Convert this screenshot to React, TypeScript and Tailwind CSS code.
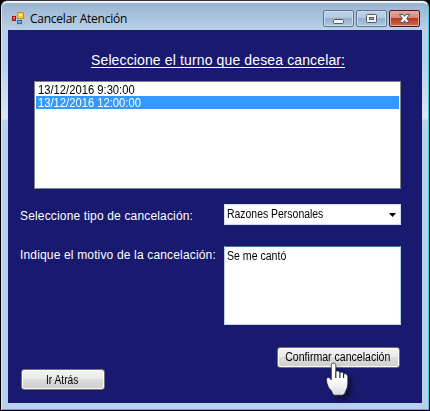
import type { ReactNode } from "react";

function AppIcon() {
  return (
    <svg width="14" height="14" viewBox="0 0 14 14" className="shrink-0">
      <rect x=".5" y=".5" width="13" height="13" fill="none" stroke="#b9bdc3" />
      <rect x="6.500" y="1.500" width="6" height="6" fill="#f6c93a" stroke="#c1921c" />
      <rect x="8" y="3" width="3" height="2" fill="#ffe993" />
      <rect x="1.500" y="5.500" width="3" height="4" fill="#e04a30" stroke="#9c1710" />
      <rect x="2" y="6" width="2" height="1" fill="#ff9a80" />
      <rect x="6.500" y="9.500" width="4" height="3" fill="#76a9f4" stroke="#2e62bd" />
    </svg>
  );
}

function CaptionButton({ danger = false, children }: { danger?: boolean; children: ReactNode }) {
  const tone = danger
    ? "border-[#501322] bg-[linear-gradient(#e4a79c_0,#d98675_45%,#b93a20_50%,#cc6a50_100%)] shadow-[inset_0_0_0_1px_#e5aaa0]"
    : "border-[#62748b] bg-[linear-gradient(#c0d4e9_0,#b1c8df_45%,#94b0cc_50%,#adc8e2_100%)] shadow-[inset_0_0_0_1px_#c9dcef]";
  return (
    <div className={`flex h-[17px] w-[31px] items-center justify-center rounded-[2px] border ${tone}`}>
      {children}
    </div>
  );
}

function HandCursor() {
  return (
    <svg
      width="28"
      height="38"
      viewBox="0 0 28 38"
      className="absolute left-[325px] top-[361px] drop-shadow-[4px_4px_2px_rgba(0,0,0,0.4)]"
    >
      <defs>
        <linearGradient id="hand" x1="0" y1="0" x2="0" y2="1">
          <stop offset="0.5" stopColor="#ffffff" />
          <stop offset="1" stopColor="#dcdce0" />
        </linearGradient>
      </defs>
      <path
        d="M6.300 19V4.500Q6.300 2 8.500 2Q10.800 2 10.800 4.500V10.500Q11.500 9.700 13 9.900Q14.600 10 14.900 11.300Q17.500 10.500 18.600 12.500Q22.300 12 22.800 15.500V23Q22.500 27 21 29.500Q20 33.500 17.500 34.200H9.500Q7 33 6.500 30Q3 27 2 22.500L1.400 18Q2.500 15.500 5 17Z"
        fill="url(#hand)"
        stroke="#17172f"
        strokeWidth=".7"
      />
      <path d="M10.800 10.500V17M14.900 11.300V17M18.600 12.500V17" fill="none" stroke="#17172f" strokeWidth="1.100" />
    </svg>
  );
}

const button =
  "flex items-center justify-center rounded-[3px] border border-[#707070] bg-[linear-gradient(#f3f3f3_0,#ebebeb_48%,#dcdcdc_50%,#cfcfcf_100%)] text-black shadow-[inset_0_0_0_1px_#fafafa]";

export default function App() {
  return (
    <div className="relative h-[411px] w-[430px] overflow-hidden bg-black font-['Liberation_Sans',Arial,sans-serif] text-[12px] leading-[13px]">
      <div className="h-[411px] w-[430px] rounded-t-[7px] border border-t-[#30343b] border-x-black border-b-black">
        <div className="flex h-full flex-col rounded-t-[6px] border-b border-l border-r border-t-2 border-b-[#2cc3dc] border-l-[#d9e8f5] border-r-[#46cfe5] border-t-[#eef5fb] bg-[linear-gradient(#9ab5d1_0,#b9d1ea_28px,#b9d1ea_60px,#dbe6f5_115px,#b9d1ea_118px,#b9d1ea_100%)] px-[6px] pb-[6px]">
          <header className="flex h-[27px] shrink-0 items-start pl-[3px] pr-[2px]">
            <div className="mt-[8px] flex">
              <AppIcon />
            </div>
            <h1 className="ml-[5px] mt-[8px] whitespace-nowrap font-['Open_Sans','Noto_Sans',sans-serif] text-[12px] leading-[16px] tracking-[-0.240px] text-black">
              Cancelar Atención
            </h1>
            <div className="ml-auto mt-[7px] flex gap-[2px]">
              <CaptionButton>
                <svg width="11" height="5" className="mt-[5px]">
                  <rect x=".5" y=".5" width="10" height="4" rx="1" fill="#f5f5f5" stroke="#535666" />
                </svg>
              </CaptionButton>
              <CaptionButton>
                <svg width="11" height="9">
                  <rect x=".5" y=".5" width="10" height="8" rx="1" fill="#f5f5f5" stroke="#535666" />
                  <rect x="3.500" y="3.500" width="4" height="2" fill="#9bb8d3" stroke="#535666" />
                </svg>
              </CaptionButton>
              <CaptionButton danger>
                <svg width="11" height="9" viewBox="0 0 11 9">
                  <path d="M.5.5H4L5.500 2.300L7 .5H10.500L7.800 4.500L10.500 8.500H7L5.500 6.700L4 8.500H.5L3.200 4.500Z" fill="#f5f5f5" stroke="#535666" />
                </svg>
              </CaptionButton>
            </div>
          </header>

          <main className="flex grow flex-col bg-[#191970] pl-[12px] pr-[21px] text-white">
            <h2 className="ml-[71px] mt-[22px] h-[16px] w-[254px] whitespace-nowrap border-b border-white text-[14px] leading-[16px] tracking-[0.130px]">
              Seleccione el turno que desea cancelar:
            </h2>
            <div className="ml-[14px] mt-[13px] h-[108px] w-[367px] border border-[#828282] bg-white p-px text-black">
              <div className="h-[13px] pl-[2px] leading-[14px]">
                <span className="inline-block origin-left scale-x-[0.935]">13/12/2016 9:30:00</span>
              </div>
              <div className="h-[13px] bg-[#3399ff] pl-[2px] leading-[14px] text-white">
                <span className="inline-block origin-left scale-x-[0.935]">13/12/2016 12:00:00</span>
              </div>
            </div>

            <div className="mt-[15px] flex h-[21px] justify-between">
              <label className="mt-[5px] whitespace-nowrap text-[12px] leading-[14px] tracking-[0.160px]">
                Seleccione tipo de cancelación:
              </label>
              <div className="flex w-[177px] items-center justify-between border border-[#d5dfea] bg-white pl-[2px] pr-[4px] text-black">
                <span className="origin-left scale-x-[0.870]">Razones Personales</span>
                <svg width="7" height="4">
                  <path d="M0 0H7L3.500 4Z" fill="#000" />
                </svg>
              </div>
            </div>

            <div className="mt-[21px] flex h-[79px] justify-between">
              <label className="mt-[2px] whitespace-nowrap text-[12px] leading-[14px] tracking-[0.160px]">
                Indique el motivo de la cancelación:
              </label>
              <div className="w-[177px] border border-b-[#b7d9ed] border-l-[#b5cfe7] border-r-[#b5cfe7] border-t-[#3d7bad] bg-white pl-[2px] pt-[3px] text-black">
                <span className="inline-block origin-left scale-x-[0.880]">Se me cantó</span>
              </div>
            </div>

            <div className={`mr-px mt-[22px] h-[21px] w-[123px] self-end ${button}`}>
              <span className="scale-x-[0.880] whitespace-nowrap pr-px">Confirmar cancelación</span>
            </div>
            <div className={`ml-px mt-px h-[21px] w-[84px] pt-px ${button}`}>
              <span className="scale-x-[0.850] whitespace-nowrap pr-[2px]">Ir Atrás</span>
            </div>
          </main>
        </div>
      </div>
      <HandCursor />
    </div>
  );
}
